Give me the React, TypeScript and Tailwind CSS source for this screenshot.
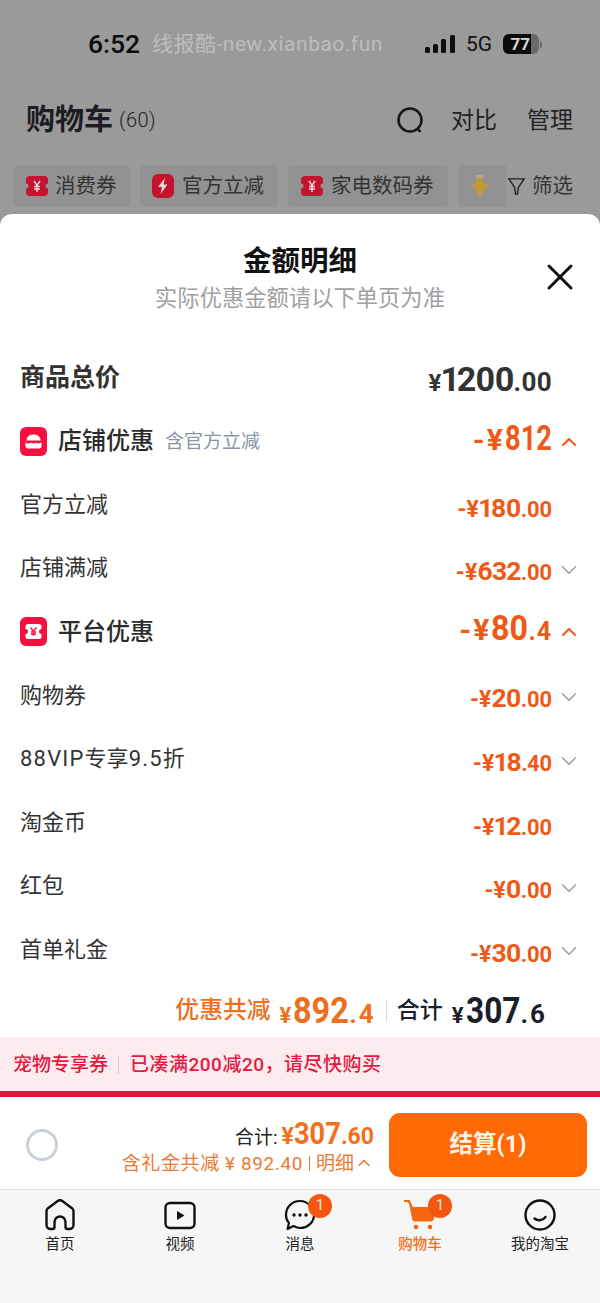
import { ChevronDown, ChevronUp, X } from "lucide-react";

const ICON_RED = "#c4122f";

function TicketIcon() {
  return (
    <svg viewBox="0 0 24 24" className="h-[24px] w-[24px]">
      <path
        d="M5 2h14a4 4 0 0 1 4 4v3.500a2.500 2.500 0 0 0 0 5V18a4 4 0 0 1-4 4H5a4 4 0 0 1-4-4v-3.500a2.500 2.500 0 0 0 0-5V6a4 4 0 0 1 4-4z"
        fill={ICON_RED}
      />
      <path d="M9 7l3 4.500L15 7M12 11.500V18M9 12.500h6M9 15h6" fill="none" stroke="#e8d8d8" strokeWidth="1.500" />
    </svg>
  );
}

function BoltIcon() {
  return (
    <svg viewBox="0 0 22 24" className="h-6 w-[22px]">
      <rect width="22" height="24" rx="6" fill={ICON_RED} />
      <path d="M13 4l-7 9h4l-1.500 7 7-9.500h-4z" fill="#e8d8d8" />
    </svg>
  );
}

function Row({ label, int, dec, chevron }: { label: React.ReactNode; int: string; dec: string; chevron?: boolean }) {
  return (
    <div className="flex h-[63.6px] items-center justify-between">
      <span className="text-[22px] leading-none text-[#333]">{label}</span>
      <div className="flex items-center">
        <span className="relative top-[3px] font-bold leading-none whitespace-nowrap text-[#ee5a16] [font-variant-numeric:proportional-nums]">
          <span className="text-[23px]">-¥</span>
          <span className="text-[26.500px] tracking-[-0.8px]">{int}</span>
          <span className="text-[22px] tracking-[-0.4px]">{dec}</span>
        </span>
        <div className="ml-[9px] flex w-[16px] justify-center pt-[3px]">
          {chevron && <ChevronDown className="h-[26px] w-[26px] shrink-0 text-[#9a9a9a]" strokeWidth={1.300} />}
        </div>
      </div>
    </div>
  );
}

function GroupRow({ icon, label, note, int, narrow, dec }: { icon: React.ReactNode; label: string; note?: string; int: string; narrow: string; dec?: string }) {
  return (
    <div className="flex h-[63.6px] items-center justify-between">
      <div className="flex items-center">
        {icon}
        <span className="ml-[11px] text-[24px] leading-none font-medium text-[#2b2b2b]">{label}</span>
        {note && <span className="ml-[11px] text-[19px] leading-none text-[#8b95a5]">{note}</span>}
      </div>
      <div className="flex items-center">
        <span className="relative top-[-3px] flex items-baseline font-bold leading-none whitespace-nowrap text-[#ee5a16]">
          <span className="text-[30px] tracking-[2px]">-¥</span>
          <span className={`inline-block origin-left text-[35px] ${narrow}`}>{int}</span>
          {dec && <span className="text-[25px] tracking-[1px]">{dec}</span>}
        </span>
        <div className="ml-[9px] flex w-[16px] justify-center pt-[1px]">
          <ChevronUp className="h-[24px] w-[24px] shrink-0 text-[#ee5a16]" strokeWidth={2} />
        </div>
      </div>
    </div>
  );
}

function TabItem({ icon, label, active, badge }: { icon: React.ReactNode; label: string; active?: boolean; badge?: boolean }) {
  return (
    <div className="relative flex flex-1 flex-col items-center">
      <div className="relative flex h-[32px] w-[32px] items-center justify-center">
        {icon}
        {badge && (
          <span className="absolute top-[-5px] left-[24px] flex h-[24px] w-[24px] items-center justify-center rounded-full bg-[#f4560f] text-[15px] leading-none text-[#ffe5d5]">
            1
          </span>
        )}
      </div>
      <span className={`mt-[5px] text-[14.500px] leading-[18px] ${active ? "font-medium text-[#f0701a]" : "text-[#222]"}`}>{label}</span>
    </div>
  );
}

export default function App() {
  return (
    <div className="flex h-[1303px] w-[600px] flex-col overflow-hidden bg-[#9a9a9a] font-['Roboto','Noto_Sans_CJK_SC',sans-serif]">
      {/* status bar */}
      <div className="flex h-[88px] shrink-0 items-center pl-[88px]">
        <span className="w-[64px] text-[26.500px] leading-none font-medium text-[#0c0c0c]">6:52</span>
        <span className="w-[273px] text-[21px] leading-none tracking-[0.5px] text-[#bdbdbd]">线报酷-new.xianbao.fun</span>
        <svg viewBox="0 0 30 20" className="h-[20px] w-[30px]">
          <rect x="0" y="13" width="5" height="6" rx="1.500" fill="#0c0c0c" />
          <rect x="8" y="10" width="5" height="9" rx="1.500" fill="#0c0c0c" />
          <rect x="16" y="5" width="5" height="14" rx="1.500" fill="#0c0c0c" />
          <rect x="25" y="1" width="5" height="18" rx="1.500" fill="#0c0c0c" />
        </svg>
        <span className="ml-[11px] w-[37px] text-[21px] leading-none text-[#111]">5G</span>
        <div className="relative flex h-[20px] w-[36px] overflow-hidden rounded-[6px] bg-[#6a6a6a]">
          <div className="flex w-[28px] items-center justify-end bg-[#0a0a0a] pr-[1px] text-[17px] leading-none font-bold text-[#d8d8d8]">77</div>
        </div>
        <div className="ml-[1px] h-[7px] w-[2px] rounded-r bg-[#6a6a6a]" />
      </div>

      {/* page header */}
      <div className="flex h-[64px] shrink-0 items-center justify-between pr-[27px] pl-[26px]">
        <div className="flex items-center">
          <span className="text-[29px] leading-none font-bold text-[#1c1c22]">购物车</span>
          <span className="ml-[6px] text-[20px] leading-none font-light tracking-[0.5px] text-[#222]">(60)</span>
        </div>
        <div className="flex items-center">
          <svg viewBox="0 0 28 28" className="h-[28px] w-[28px]" fill="none" stroke="#15151a" strokeWidth="2.500">
            <circle cx="14" cy="14" r="11.500" />
            <path d="M21 22l3.500 4" />
          </svg>
          <span className="ml-[27px] text-[23px] leading-none text-[#222]">对比</span>
          <span className="ml-[30px] text-[23px] leading-none text-[#222]">管理</span>
        </div>
      </div>

      {/* filter chips */}
      <div className="flex h-[62px] shrink-0 items-start gap-[10px] pt-[13px] pl-[13px]">
        <div className="flex h-[42px] w-[117px] items-center rounded-[5px] bg-[#929292] pl-[12px]">
          <TicketIcon />
          <span className="ml-[6px] text-[20.500px] leading-none text-[#333]">消费券</span>
        </div>
        <div className="flex h-[42px] w-[138px] items-center rounded-[5px] bg-[#929292] pl-[12px]">
          <BoltIcon />
          <span className="ml-[8px] text-[20.500px] leading-none text-[#333]">官方立减</span>
        </div>
        <div className="flex h-[42px] w-[160px] items-center rounded-[5px] bg-[#929292] pl-[12px]">
          <TicketIcon />
          <span className="ml-[7px] text-[20.500px] leading-none text-[#333]">家电数码券</span>
        </div>
        <div className="flex h-[42px] w-[48px] items-center rounded-l-[5px] bg-[#929292] pl-[12px]">
          <svg viewBox="0 0 20 24" className="h-[24px] w-[20px]">
            <path d="M6 1h7v9h6l-9 13L1 10h5z" fill="#bd9a3e" />
            <path d="M6 1h7v3H6z" fill="#b5a888" />
          </svg>
        </div>
        <div className="ml-[-9px] flex h-[42px] items-center">
          <svg viewBox="0 0 20 20" className="h-[19px] w-[19px]" fill="none" stroke="#222" strokeWidth="1.500">
            <path d="M2 2h16l-6 9-1 7h-2l-1-7z" />
          </svg>
          <span className="ml-[6px] text-[20.500px] leading-none text-[#333]">筛选</span>
        </div>
      </div>

      {/* detail sheet */}
      <div className="relative flex flex-1 flex-col rounded-t-[12px] bg-white">
        <button className="absolute top-[41px] left-[538px] text-[#111]">
          <X className="h-[44px] w-[44px]" strokeWidth={1.600} />
        </button>
        <div className="flex flex-col items-center pt-[34px]">
          <span className="text-[28.500px] leading-none font-bold text-[#111]">金额明细</span>
          <span className="mt-[10px] text-[22.300px] leading-none text-[#a0a0a0]">实际优惠金额请以下单页为准</span>
        </div>

        <div className="mt-[37px] flex flex-col pr-[23px] pl-[20px]">
          <div className="flex h-[63.6px] items-center justify-between">
            <span className="text-[25px] leading-none font-bold text-[#333]">商品总价</span>
            <span className="relative top-[1px] mr-[25px] leading-none font-bold whitespace-nowrap text-[#333] [font-variant-numeric:proportional-nums]">
              <span className="text-[24px]">¥</span>
              <span className="text-[34px] tracking-[-1px]">1200</span>
              <span className="text-[26px]">.00</span>
            </span>
          </div>
          <GroupRow
            icon={
              <svg viewBox="0 0 27 29" className="h-[29px] w-[27px]">
                <rect width="27" height="29" rx="6" fill="#f5103f" />
                <path d="M6.500 13.500c0-3.500 2.500-6 7-6s7 2.500 7 6z" fill="#fff" />
                <path d="M5.500 15.500c2.500 1.200 3.500 1.200 5 .2 1.500 1 4.500 1 6 0 1.500 1 2.500 1 5-.2V19c0 1.500-1 2.500-2.500 2.500H8c-1.500 0-2.500-1-2.500-2.500z" fill="#fff" />
              </svg>
            }
            label="店铺优惠"
            note="含官方立减"
            int="812"
            narrow="mr-[-13px] scale-x-[0.78]"
          />
          <Row label="官方立减" int="180" dec=".00" />
          <Row label="店铺满减" int="632" dec=".00" chevron />
          <GroupRow
            icon={
              <svg viewBox="0 0 27 29" className="h-[29px] w-[27px]">
                <rect width="27" height="29" rx="6" fill="#f5103f" />
                <path d="M8 7h11a2.500 2.500 0 0 1 2.500 2.500V12a2.500 2.500 0 0 0 0 5v2.500A2.500 2.500 0 0 1 19 22H8a2.500 2.500 0 0 1-2.500-2.500V17a2.500 2.500 0 0 0 0-5V9.500A2.500 2.500 0 0 1 8 7z" fill="#fff" />
                <path d="M10.500 10.500l3 3.500 3-3.500M13.500 14v5M11 15h5M11 17h5" fill="none" stroke="#f5103f" strokeWidth="1.300" />
              </svg>
            }
            label="平台优惠"
            int="80"
            narrow="mr-[-3px] scale-x-[0.92]"
            dec=".4"
          />
          <Row label="购物券" int="20" dec=".00" chevron />
          <Row
            label={
              <>
                <span className="tracking-[1.200px]">88VIP</span>专享<span className="tracking-[1.200px]">9.5</span>折
              </>
            }
            int="18"
            dec=".40"
            chevron
          />
          <Row label="淘金币" int="12" dec=".00" />
          <Row label="红包" int="0" dec=".00" chevron />
          <Row label="首单礼金" int="30" dec=".00" chevron />
        </div>

        {/* totals */}
        <div className="flex h-[55px] items-center justify-end pt-[3px] pr-[53px]">
          <span className="text-[23.800px] leading-none font-medium text-[#ee6f1c]">优惠共减</span>
          <span className="ml-[9px] flex items-baseline leading-none font-bold whitespace-nowrap text-[#ee6f1c]">
            <span className="text-[22px]">¥</span>
            <span className="ml-[2px] mr-[-6px] inline-block origin-left scale-x-[0.9] text-[36px]">892</span>
            <span className="text-[26px] tracking-[2px]">.4</span>
          </span>
          <div className="mr-[10px] ml-[10px] h-[22px] w-px bg-[#ddd]" />
          <span className="text-[23px] leading-none font-medium text-[#1a1f2a]">合计</span>
          <span className="ml-[9px] flex items-baseline leading-none font-bold whitespace-nowrap text-[#1a1f2a]">
            <span className="text-[22px]">¥</span>
            <span className="ml-[2px] mr-[-7px] inline-block origin-left scale-x-[0.88] text-[36px]">307</span>
            <span className="text-[26px] tracking-[2px]">.6</span>
          </span>
        </div>

        {/* notice band */}
        <div className="flex h-[60px] items-center border-b-[6px] border-[#ee1040] bg-[#fdecef] pt-[2px] pl-[13px] text-[19px] leading-none font-medium text-[#e8173f]">
          <span>宠物专享券</span>
          <div className="mr-[11px] ml-[10px] h-[18px] w-px bg-[#f5b9c6]" />
          <span className="tracking-[0.5px]">已凑满200减20，请尽快购买</span>
        </div>

        {/* checkout bar */}
        <div className="flex h-[92px] items-center pt-[4px] pr-[13px] pl-[26px]">
          <div className="h-[32px] w-[32px] rounded-full border-[3px] border-[#c9d0d8]" />
          <div className="flex flex-1 flex-col items-end pt-[1px] pr-[15px]">
            <div className="flex items-baseline leading-none">
              <span className="text-[19px] text-[#222]">合计:</span>
              <span className="ml-[4px] flex items-baseline font-bold whitespace-nowrap text-[#f2701a]">
                <span className="text-[23px]">¥</span>
                <span className="mr-[-8px] inline-block origin-left scale-x-[0.85] text-[32px]">307</span>
                <span className="text-[23px]">.60</span>
              </span>
            </div>
            <div className="mt-[4px] flex items-center text-[19px] leading-none text-[#ec7a33]">
              <span className="tracking-[0.6px]">含礼金共减 ¥ 892.40</span>
              <div className="mx-[6px] h-[15px] w-px bg-[#ec7a33]" />
              <span>明细</span>
              <ChevronUp className="h-[20px] w-[20px]" strokeWidth={1.800} />
            </div>
          </div>
          <button className="flex h-[64px] w-[198px] items-center justify-center rounded-[11px] bg-[#ff6a06] text-[23.500px] leading-none font-bold text-[#fff3e8]">
            结算(1)
          </button>
        </div>

        {/* tab bar */}
        <div className="flex flex-1 border-t border-[#dcdcdc] bg-[#f6f6f6] pt-[9px]">
          <TabItem
            label="首页"
            icon={
              <svg viewBox="0 0 32 32" className="h-[32px] w-[32px]" fill="none" stroke="#111" strokeWidth="2.400" strokeLinejoin="round">
                <path d="M2.500 12c0-1 .5-1.800 1.200-2.500l10-7.500c1.400-1 3.200-1 4.600 0l10 7.500c.7.7 1.200 1.500 1.200 2.500v14a4 4 0 0 1-4 4h-2a2 2 0 0 1-2-2v-5a5.500 5.500 0 0 0-11 0v5a2 2 0 0 1-2 2h-2a4 4 0 0 1-4-4z" />
              </svg>
            }
          />
          <TabItem
            label="视频"
            icon={
              <svg viewBox="0 0 32 32" className="h-[32px] w-[32px]" fill="none">
                <rect x="1.500" y="4" width="29" height="25" rx="4.500" stroke="#111" strokeWidth="2.400" />
                <path d="M13 12l7.500 4.500-7.500 4.500z" fill="#111" />
              </svg>
            }
          />
          <TabItem
            label="消息"
            badge
            icon={
              <svg viewBox="0 0 32 32" className="h-[32px] w-[32px]" fill="none">
                <path d="M16 2C8 2 2 8 2 16c0 3 1 6 3 8l-1.500 6 6-3c2 1 4 2 6.500 2 8 0 14-6 14-13S24 2 16 2z" stroke="#111" strokeWidth="2.200" strokeLinejoin="round" />
                <circle cx="10" cy="16" r="1.700" fill="#111" />
                <circle cx="16" cy="16" r="1.700" fill="#111" />
                <circle cx="22" cy="16" r="1.700" fill="#111" />
              </svg>
            }
          />
          <TabItem
            label="购物车"
            active
            badge
            icon={
              <svg viewBox="0 0 32 32" className="h-[32px] w-[32px]" fill="none">
                <path d="M1 1.500h3.500c.8 0 1.400.5 1.600 1.200l1.400 5.300H30v11c0 2-1.500 3.500-3.500 3.500H11c-1.500 0-2.500-1-2.800-2.300L5 4" fill="#f4660f" />
                <path d="M0 2h5l3 7" stroke="#f4660f" strokeWidth="2" />
                <circle cx="12" cy="28" r="2.300" fill="#f4660f" />
                <circle cx="26" cy="28" r="2.300" fill="#f4660f" />
              </svg>
            }
          />
          <TabItem
            label="我的淘宝"
            icon={
              <svg viewBox="0 0 32 32" className="h-[32px] w-[32px]" fill="none" stroke="#111" strokeWidth="2.400">
                <circle cx="16" cy="16" r="14.500" />
                <path d="M10.500 19.500c3 2.500 8 2.500 11-1.500" strokeLinecap="round" />
              </svg>
            }
          />
        </div>
      </div>
    </div>
  );
}
